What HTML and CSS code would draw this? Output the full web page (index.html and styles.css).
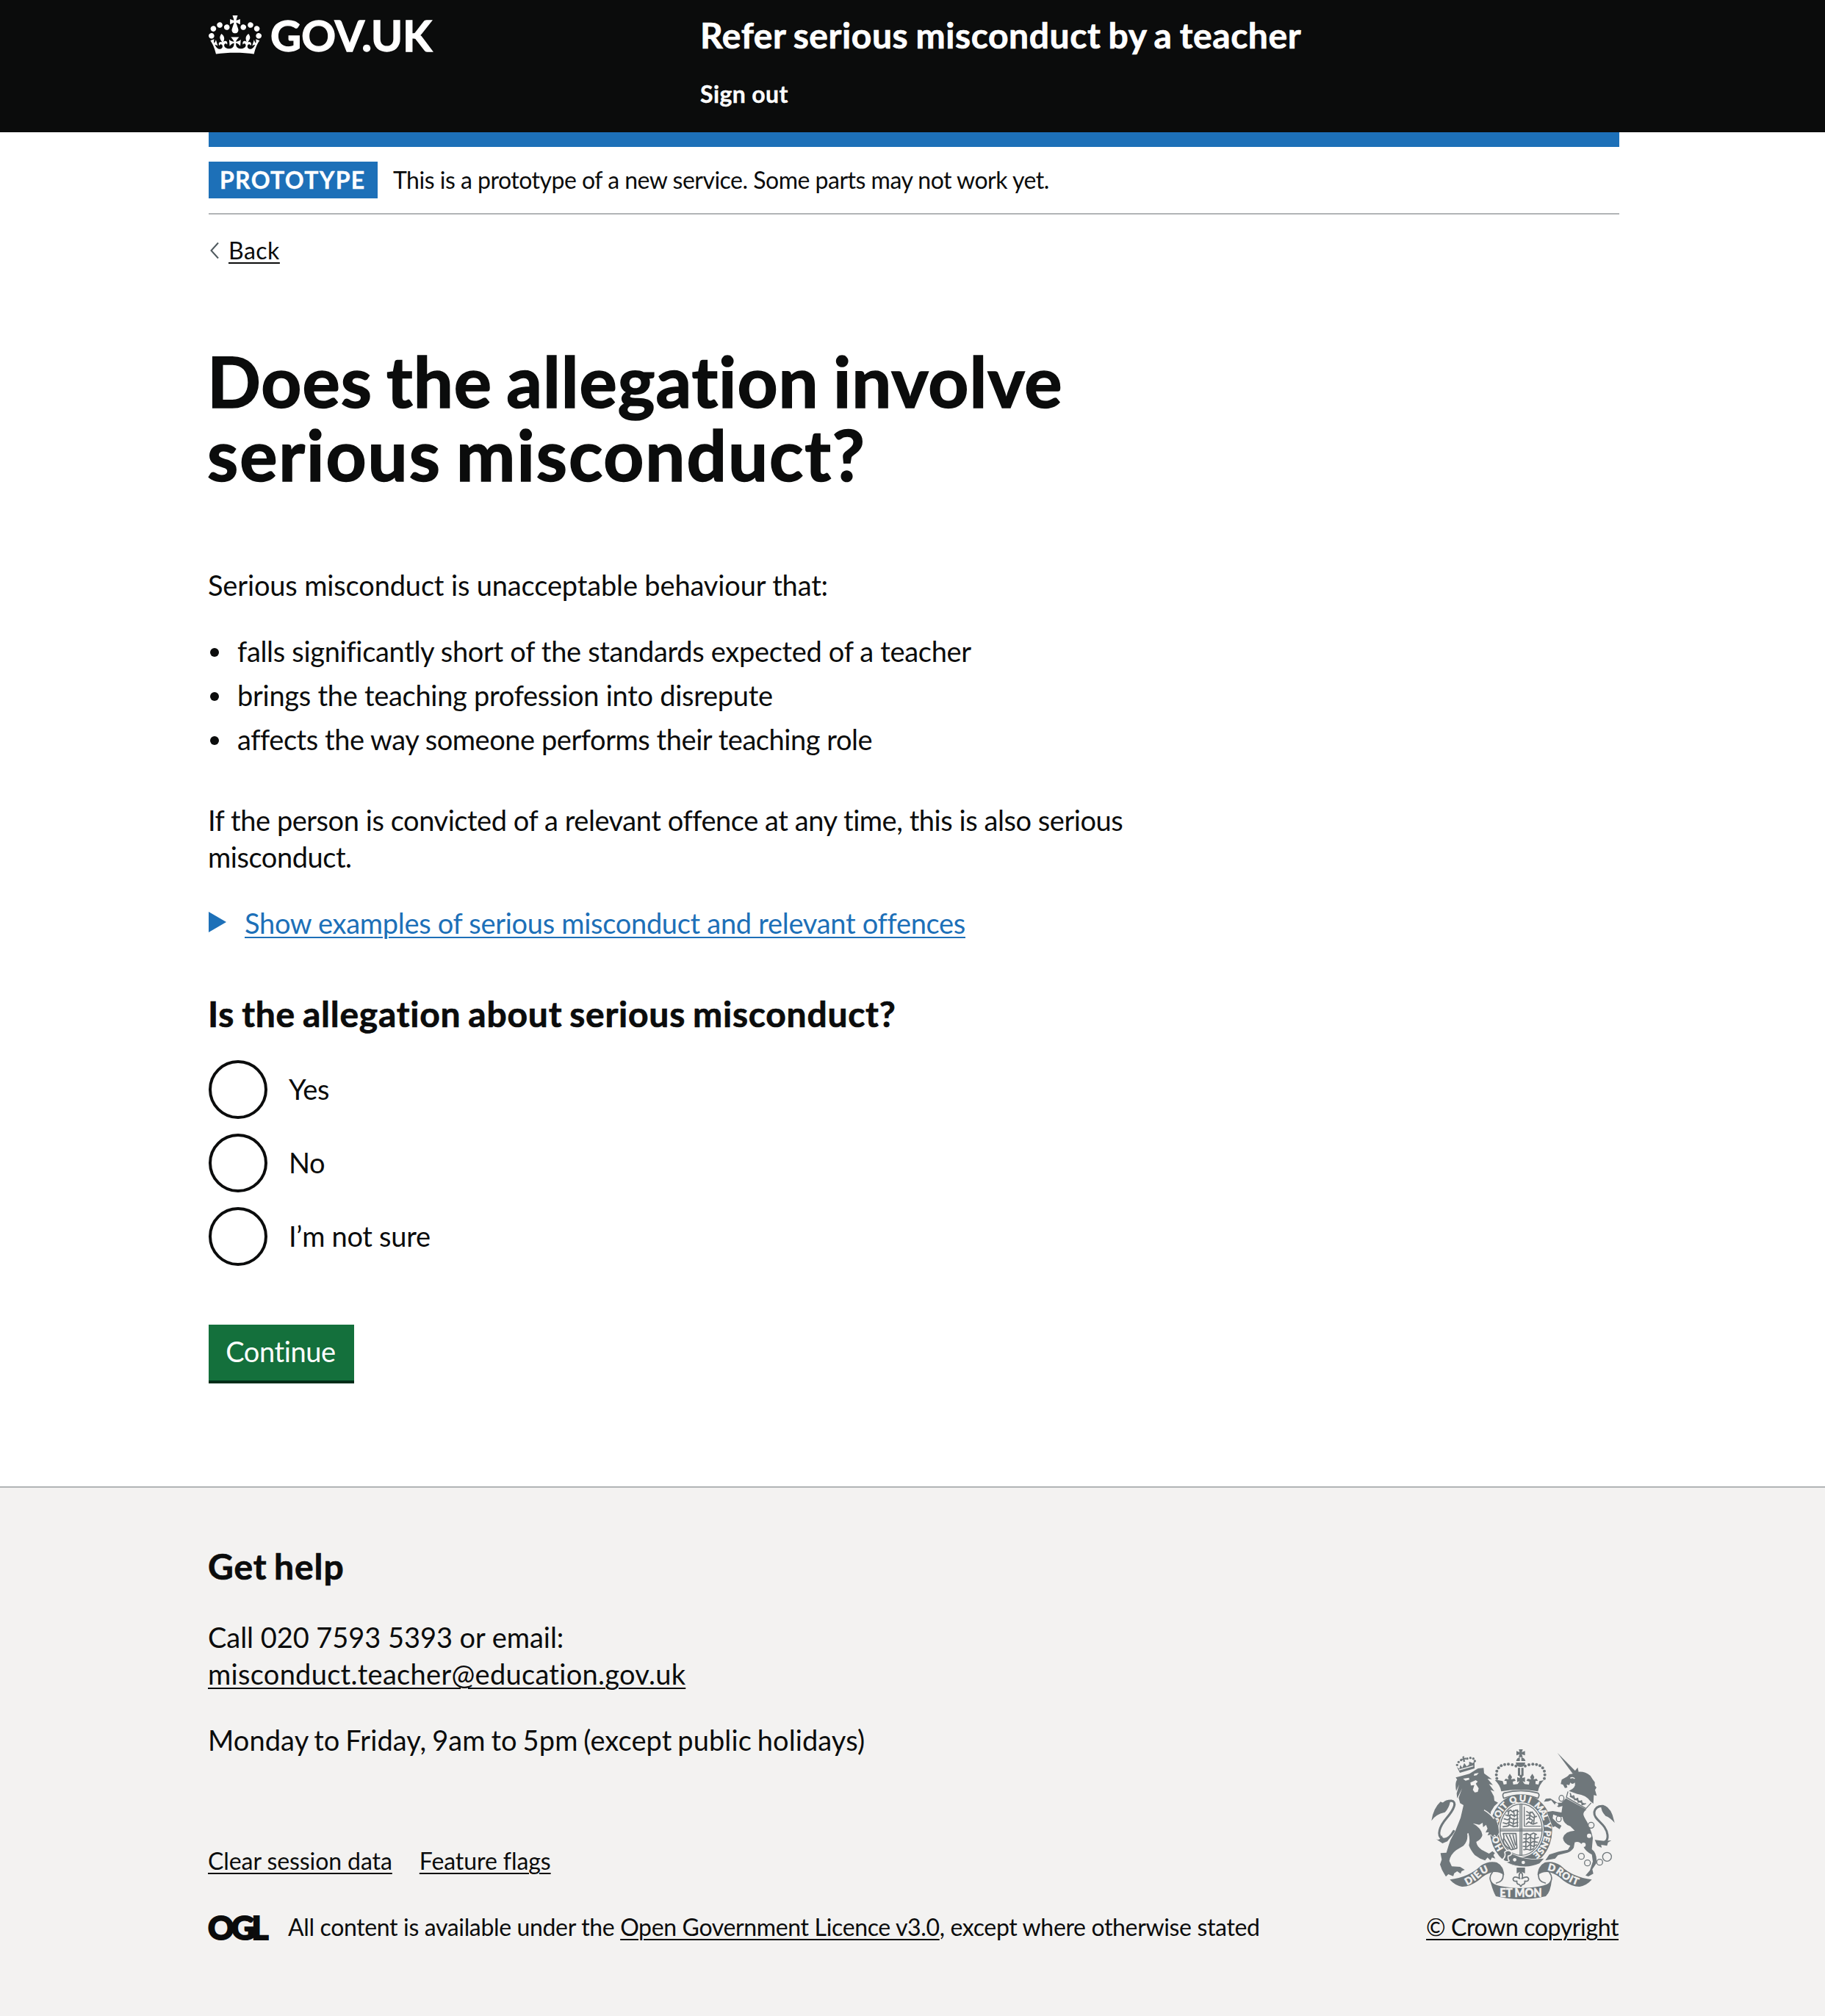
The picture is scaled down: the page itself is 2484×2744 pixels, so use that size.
FILE: index.html
```html
<!DOCTYPE html>
<html lang="en">
<head>
<meta charset="utf-8">
<title>Does the allegation involve serious misconduct?</title>
<link rel="stylesheet" href="styles.css">
</head>
<body>
<header class="header">
  <div class="container header-row">
    <a class="logo" href="#">
      <svg class="crown" viewBox="0 0 132 97" width="72" height="53" aria-hidden="true"><path fill="#fff" d="M25 30.2c3.5 1.5 7.7-.2 9.1-3.7 1.5-3.6-.2-7.8-3.9-9.2-3.6-1.4-7.6.3-9.1 3.9-1.4 3.5.3 7.5 3.9 9zM9 39.5c3.6 1.5 7.8-.2 9.2-3.7 1.5-3.6-.2-7.8-3.9-9.1-3.6-1.5-7.6.2-9.1 3.8-1.4 3.5.3 7.5 3.8 9zM4.4 57.2c3.5 1.5 7.7-.2 9.1-3.8 1.5-3.6-.2-7.7-3.9-9.1-3.5-1.5-7.6.3-9.1 3.8-1.4 3.5.3 7.6 3.9 9.1zm38.3-21.4c3.5 1.5 7.7-.2 9.1-3.8 1.5-3.6-.2-7.7-3.9-9.1-3.6-1.5-7.6.3-9.1 3.8-1.3 3.6.4 7.7 3.9 9.1zm64.4-5.6c-3.6 1.5-7.8-.2-9.1-3.7-1.5-3.6.2-7.8 3.8-9.2 3.6-1.4 7.7.3 9.2 3.9 1.3 3.5-.4 7.5-3.9 9zm15.9 9.3c-3.6 1.5-7.7-.2-9.1-3.7-1.5-3.6.2-7.8 3.7-9.1 3.6-1.5 7.7.2 9.2 3.8 1.5 3.5-.3 7.5-3.8 9zm4.7 17.7c-3.6 1.5-7.8-.2-9.2-3.8-1.5-3.6.2-7.7 3.9-9.1 3.6-1.5 7.7.3 9.2 3.8 1.3 3.5-.4 7.6-3.9 9.1zM89.3 35.8c-3.6 1.5-7.8-.2-9.2-3.8-1.4-3.6.2-7.7 3.9-9.1 3.6-1.5 7.7.3 9.1 3.8 1.4 3.6-.3 7.7-3.8 9.1zM69.7 17.7l8.9 4.7V9.3l-8.9 2.8c-.2-.3-.5-.6-.9-.9L72.4 0H59.6l3.5 11.2c-.3.3-.6.5-.9.9l-8.8-2.8v13.1l8.8-4.7c.3.3.6.7.9.9l-5 15.4v.1c-.2.8-.4 1.6-.4 2.4 0 4.1 3.1 7.5 7 8.1h.2c.3 0 .7.1 1 .1.4 0 .7 0 1-.1h.2c4-.6 7.1-4.1 7.1-8.1 0-.8-.1-1.7-.4-2.4V34l-5.1-15.4c.4-.2.7-.6 1-.9zM66 92.8c16.9 0 32.8 1.1 47.1 3.2 4-16.9 8.9-26.7 14-33.5l-9.6-3.4c1 4.9 1.1 7.2 0 10.2-1.5-1.4-3-4.3-4.2-8.7L108.6 76c2.8-2 5-3.2 7.5-3.3-4.4 9.4-10 11.9-13.6 11.2-4.3-.8-6.3-4.6-5.6-7.9 1-4.7 5.7-5.9 8-.5 4.3-8.7-3-11.4-7.6-8.8 7.1-7.2 7.9-13.5 2.1-21.1-8 6.1-8.1 12.3-4.5 20.8-4.7-5.4-12.1-2.5-9.5 6.2 3.4-5.2 7.9-2 7.2 3.1-.6 4.3-6.4 7.8-13.5 7.2-10.3-.9-10.9-8-11.2-13.8 2.5-.5 7.1 1.8 11 7.3L80.2 60c-4.1 4.4-8 5.3-12.3 5.4 1.4-4.4 8-11.6 8-11.6H55.5s6.4 7.2 7.9 11.6c-4.2-.1-8-1-12.3-5.4l1.4 16.4c3.9-5.5 8.5-7.7 10.9-7.3-.3 5.8-.9 12.8-11.1 13.8-7.2.6-12.9-2.9-13.5-7.2-.7-5 3.8-8.3 7.1-3.1 2.7-8.7-4.6-11.6-9.4-6.2 3.7-8.5 3.6-14.7-4.6-20.8-5.8 7.6-5 13.9 2.2 21.1-4.7-2.6-11.9.1-7.7 8.8 2.3-5.5 7.1-4.2 8.1.5.7 3.3-1.3 7.1-5.7 7.9-3.5.7-9-1.8-13.5-11.2 2.5.1 4.7 1.3 7.5 3.3l-4.7-15.4c-1.2 4.4-2.7 7.2-4.3 8.7-1.1-3-.9-5.3 0-10.2l-9.5 3.4c5 6.9 9.9 16.7 14 33.5 14.8-2.1 30.8-3.2 47.7-3.2z"/></svg>
      <span class="logo-text">GOV.UK</span>
    </a>
    <div class="header-content">
      <a class="service-name" href="#">Refer serious misconduct by a teacher</a>
      <a class="sign-out" href="#">Sign out</a>
    </div>
  </div>
</header>

<div class="container">
  <div class="blue-bar"></div>
  <div class="phase-banner">
    <strong class="tag">PROTOTYPE</strong>
    <span class="phase-text">This is a prototype of a new service. Some parts may not work yet.</span>
  </div>
  <a class="back-link" href="#">
    <svg width="12" height="24" viewBox="0 0 12 24" aria-hidden="true"><path d="M11 1.5 1.5 12 11 22.5" fill="none" stroke="#505a5f" stroke-width="2"/></svg>
    <span class="link small back-text">Back</span>
  </a>

  <main class="main">
    <h1 class="title"><span class="title-line">Does the allegation involve</span> <span class="title-line title-line-wide">serious misconduct?</span></h1>
    <p class="body intro">Serious misconduct is unacceptable behaviour that:</p>
    <ul class="list">
      <li class="list-item falls">falls significantly short of the standards expected of a teacher</li>
      <li class="list-item brings">brings the teaching profession into disrepute</li>
      <li class="list-item affects">affects the way someone performs their teaching role</li>
    </ul>
    <p class="body convicted">If the person is convicted of a relevant offence at any time, this is also serious misconduct.</p>
    <div class="details">
      <span class="arrow"></span>
      <span class="link details-text">Show examples of serious misconduct and relevant offences</span>
    </div>
    <h2 class="heading question">Is the allegation about serious misconduct?</h2>
    <div class="radios">
      <div class="radio"><span class="circle"></span><span class="label">Yes</span></div>
      <div class="radio"><span class="circle"></span><span class="label">No</span></div>
      <div class="radio"><span class="circle"></span><span class="label">I’m not sure</span></div>
    </div>
    <button class="button" type="button">Continue</button>
  </main>
</div>

<footer class="footer">
  <div class="container footer-row">
    <div class="footer-main">
      <h2 class="heading help">Get help</h2>
      <p class="body call">Call 020 7593 5393 or email:<br><a class="link email" href="#">misconduct.teacher@education.gov.uk</a></p>
      <p class="body hours">Monday to Friday, 9am to 5pm (except public holidays)</p>
      <div class="footer-links small"><a class="link" href="#">Clear session data</a><a class="link" href="#">Feature flags</a></div>
      <div class="licence">
        <span class="ogl">OGL</span>
        <span class="small licence-text">All content is available under the <a class="link" href="#">Open Government Licence v3.0</a>, except where otherwise stated</span>
      </div>
    </div>
    <a class="copyright" href="#">
      <svg class="arms" viewBox="144 90 750 612" width="250" height="204" aria-hidden="true">
        <defs>
          <path id="garter" pathLength="668" d="M511 533A96 115 0 0 1 415 418A96 115 0 0 1 511 303A96 115 0 0 1 607 418A96 115 0 0 1 511 533"/>
          <path id="scroll-left" d="M290 645Q327 628 352 602Q368 590 396 586"/>
          <path id="scroll-right" d="M618 584Q646 588 666 604Q703 634 750 647"/>
        </defs>
        <!-- garter and shield -->
        <ellipse class="ink" cx="511" cy="420" rx="127" ry="148"/>
        <path class="line w5 capfill" d="M442 268Q510 250 578 268Q590 274 580 290 510 262 440 290 432 274 442 268z"/>
        <ellipse class="paper" cx="511" cy="418" rx="92" ry="112"/>
        <ellipse class="line w4" cx="511" cy="418" rx="86" ry="105"/>
        <path class="line w4" d="M507 314V522M514 314V522M426 416H597M426 423H597M524 326V404H590"/>
        <path class="line w5" d="M456 344l12-6 8 8 14-8 10 6M448 358l12 4 10-6 12 6 16-6M442 374l14 4 12-8 14 8 16-6M438 390l14 4 12-8 16 8 18-6M438 406l16-2 10-6 16 8 18-4M462 340l-4 18M480 340l4 24M496 338v68M466 362l-6 40M482 372l-4 30"/>
        <path class="line w5" d="M534 344l12 8 10-6 10 14M532 360l14-2 14 10 14-4M534 376l10-6 14 10-6 14M532 396l10-10 18 10 16-6M548 346l-2 30M566 360l-4 34"/>
        <path class="line w5" d="M522 438l14-4 10 6 16-8 12 6M522 454l16 2 10-8 14 8 20-6M520 470l14-4 14 8 14-8 16 4M520 486l16 2 10-8 14 6 14-6M522 500l14-2 12 4 14-6M532 434l-2 64M550 440v58M568 436l-4 54"/>
        <path class="line w5" d="M438 434l52 0 4 60-22 6M438 436q6 10 0 24 0 26 34 40M450 440l28 56M464 440l20 50M478 440l10 40M442 456l24 38"/>
        <path class="ink edge" d="M458 508Q500 536 560 540L604 536 586 556Q546 574 500 566 464 560 446 546z"/>
        <path class="buckle w5" d="M444 510q14-14 28 0 4 12-14 16-2 10 4 20-16 8-26-6 14-12 8-30z"/>
        <circle class="paper" cx="485" cy="541" r="7"/><circle class="paper" cx="520" cy="552" r="7"/>
        <g class="motto" font-size="36">
          <text><textPath href="#garter" startOffset="84" textLength="58">HO</textPath></text>
          <text><textPath href="#garter" startOffset="194" textLength="82">SOIT</textPath></text>
          <text><textPath href="#garter" startOffset="290" textLength="80">QUI</textPath></text>
          <text><textPath href="#garter" startOffset="390" textLength="72">MAL</textPath></text>
          <text><textPath href="#garter" startOffset="474" textLength="20">Y</textPath></text>
          <text><textPath href="#garter" startOffset="504" textLength="112">PENSE</textPath></text>
        </g>
        <!-- lion -->
        <g class="ink">
          <circle cx="250" cy="154" r="5"/><circle cx="256" cy="142" r="5"/><circle cx="266" cy="134" r="5"/><circle cx="291" cy="128" r="5"/><circle cx="304" cy="125" r="5"/><circle cx="316" cy="128" r="5"/><circle cx="322" cy="138" r="5"/>
          <path d="M271 120l8-2-1 8 7-2 2 8-7-1 3 9-8 2-1-9-7 3-1-8 7 0zM249 162l10 8 4-16 8 12 8-20 10 14 10-8 0-12 14 6 8-6 0 28-60 18z"/>
        </g>
        <path class="cut" d="M258 174l58-16"/>
        <path class="ink edge" d="M244 205L262 200 300 190 335 168 358 166 360 188 392 212 374 210 396 236 380 232 402 262 386 256 400 282 402 300 417 308 402 322 388 344 386 358 408 376 418 404 421 430 412 448 402 438 396 448 388 438 374 442 380 428 366 430 374 414 368 398 356 408 354 390 340 398 314 392Q350 412 353 440 350 456 328 468 330 486 350 500L380 516 394 506 404 514 398 522 406 536 392 532 386 544 374 532 364 544 344 536 322 522Q304 500 298 482 304 460 296 432L291 434Q296 462 276 484L246 502Q222 520 218 546L228 568 262 570 281 582 268 588 264 598 250 588 238 596 234 608 214 600 204 610 196 596 188 582 180 560 187 540 182 514 206 512 214 486 222 462 244 420 264 370 276 318 262 310 256 288 270 250 250 290 248 270 258 234 246 260Q240 226 250 214z"/>
        <g class="ink">
          <path d="M207 300Q194 312 182 304 152 332 145 382 160 356 200 347 216 332 222 303zM163 456Q182 466 186 440L194 456 222 450 210 466 190 474z"/>
        </g>
        <path class="line w9" d="M236 424Q214 464 188 455C166 440 178 405 206 372C240 332 250 304 226 300Q204 300 196 310"/>
        <path class="paper" d="M274 210l24-4 2 8-16 4zM320 190l18-4-8 10-12 2zM304 226l22-10 8 6-8 8 12 20-4 14-12 2-8-10 6-20-14 2z"/>
        <path class="cut" d="M360 338Q384 352 400 374"/>
        <!-- crown -->
        <g class="ink">
          <path d="M502 90h16l-4 12 13-5v18l-13-5 4 12h-17l4-12-13 5v-18l13 5zM491 138q2-14 15-15v15zM512 123q14 1 17 15h-17z"/>
          <path d="M489 144h39q-2 18-19 18t-20-18zM498 166h9v32h-9zM512 166h9v32h-9z"/>
          <circle cx="410" cy="194" r="6"/><circle cx="412" cy="179" r="6"/><circle cx="419" cy="166" r="6"/><circle cx="430" cy="157" r="6"/><circle cx="444" cy="152" r="6"/><circle cx="459" cy="151" r="6"/><circle cx="475" cy="153" r="6"/><circle cx="490" cy="158" r="6"/><circle cx="412" cy="209" r="6"/>
          <circle cx="608" cy="194" r="6"/><circle cx="606" cy="179" r="6"/><circle cx="599" cy="166" r="6"/><circle cx="588" cy="157" r="6"/><circle cx="574" cy="152" r="6"/><circle cx="559" cy="151" r="6"/><circle cx="543" cy="153" r="6"/><circle cx="528" cy="158" r="6"/><circle cx="606" cy="209" r="6"/>
          <path d="M418 216l18 4 4 14 12-2 0-12-10-2 6-8 12 3-3-10 8-13 9 13-4 10 14-3 5 8-12 4 2 12 18-2 8-12-10 4v-20l12 4-4-14h16l-4 14 12-4v20l-10-4 8 12 18 2 2-12-12-4 5-8 14 3-4-10 9-13 8 13-3 10 12-3 6 8-10 2 0 12 12 2 4-14 18-4q-20 20-24 46-75-14-150 0-4-26-26-46z"/>
        </g>
        <!-- unicorn -->
        <path class="ink edge" d="M694 290L778 336Q758 350 770 368 796 410 804 452L800 498Q818 512 819 540L818 556 802 580 806 598 786 609 774 605 792 584 804 548 800 520Q772 506 764 484 748 462 730 470L726 492Q716 508 700 512L662 522 650 536 610 544 626 520 664 508 702 500 712 484Q684 474 682 452 690 424 730 422L712 404Q684 396 680 366L668 366 642 356 640 372 660 392 676 402 668 416 650 404 640 408 626 372 616 346 640 342 676 348 680 322 664 326 650 318 634 298 622 302 604 304 612 292 630 290 646 300 658 308 676 308z"/>
        <g class="ink">
          <path d="M659 104L734 180 722 190z"/>
          <path d="M722 190L742 164 746 182Q772 180 794 198L804 214 812 224 812 238 819 246 813 256 820 280 808 277 806 312 794 302Q776 276 740 272L706 260Q736 248 731 226 720 236 712 226L708 236 697 234 700 246 690 248 682 234 673 232 677 214Q704 200 708 192z"/>
          <path d="M838 318Q868 316 884 358L893 390Q874 368 856 362 836 342 838 318zM812 460L822 484 840 492 838 480 862 484 866 470 880 462 850 464z"/>
        </g>
        <path class="line w9" d="M822 470Q868 478 864 440C858 390 806 380 810 346Q816 320 846 322"/>
        <path class="line w4" d="M702 264l-6 22 80 46 20-22"/>
        <path class="line w5" d="M712 270l4 14 10-4 4 16 12-6 2 16 14-6 2 16 14-4M712 282l58 32"/>
        <path class="cut" d="M712 208q10-6 18 2"/>
        <g class="line w4"><ellipse cx="676" cy="290" rx="10" ry="12"/><ellipse cx="665" cy="374" rx="10" ry="12"/><circle class="paper-fill" cx="797" cy="400" r="12"/><circle cx="757" cy="527" r="12"/><circle cx="782" cy="554" r="12"/><circle cx="832" cy="551" r="12"/><circle cx="862" cy="529" r="18"/></g>
        <circle class="paper" cx="656" cy="316" r="7"/><circle class="paper" cx="789" cy="443" r="9"/><circle class="paper" cx="766" cy="480" r="9"/>
        <!-- scroll -->
        <path class="ink edge" d="M220 622Q300 612 348 564 380 544 412 552 440 566 442 604 420 588 394 592 366 598 336 626 300 652 270 651 240 646 220 622z"/>
        <path class="ink edge" d="M800 622Q720 612 672 564 640 544 608 552 580 566 578 604 600 588 626 592 654 598 684 626 720 652 750 651 780 646 800 622z"/>
        <path class="line w5" d="M438 600Q440 630 410 636M394 592Q372 620 400 644M582 600Q580 630 610 636M626 592Q648 620 620 644"/>
        <path class="ink" d="M384 624Q392 652 510 657 628 652 636 624 632 672 612 690 510 714 408 690 396 670 384 624z"/>
        <path class="ink" d="M493 573h34v24l-17-8-17 8z"/>
        <path class="line w5" d="M510 590q12 14 4 28 24-14 28 2-2 12-16 8 2 14-10 14l-6 8-6-8q-12 0-10-14-14 4-16-8 4-16 28-2-8-14 4-28z"/>
        <g class="motto">
          <text font-size="40"><textPath href="#scroll-left" textLength="106">DIEU</textPath></text>
          <text font-size="40"><textPath href="#scroll-right" textLength="138">DROIT</textPath></text>
          <text font-size="48" x="424" y="692" textLength="172" lengthAdjust="spacingAndGlyphs">ET MON</text>
        </g>
      </svg>
      <span class="link small copyright-text">© Crown copyright</span>
    </a>
  </div>
</footer>
</body>
</html>
```
FILE: styles.css
```css
* { box-sizing: border-box; }

body {
  margin: 0;
  background: #fff;
  color: #0b0c0c;
  font-family: Lato, "Liberation Sans", sans-serif;
  font-size: 38px;
  line-height: 50px;
  font-variant-ligatures: none;
}

a { color: inherit; text-decoration: none; }
h1, h2, p, ul { margin: 0; padding: 0; font-weight: 400; }

.container { width: 1920px; margin-left: 284px; }

.link {
  text-decoration: underline;
  text-decoration-thickness: 2px;
  text-underline-offset: 4px;
}

.small { font-size: 32px; line-height: 40px; }

/* Header */
.header { height: 180px; background: #0b0c0c; color: #fff; }
.header-row { display: flex; }
.logo { display: flex; width: 669px; padding-top: 17px; }
.crown { margin-top: 4px; }
.logo-text {
  margin-left: 12px;
  padding-top: 1px;
  font-size: 58px;
  line-height: 60px;
  font-weight: 700;
  letter-spacing: 0.1px;
  -webkit-text-stroke: 1.4px #fff;
}
.header-content { display: flex; flex-direction: column; padding-top: 18px; }
.service-name {
  font-size: 48px;
  line-height: 60px;
  font-weight: 700;
  letter-spacing: 0.57px;
  word-spacing: -2px;
  -webkit-text-stroke: 0.7px #fff;
}
.sign-out {
  margin-top: 30px;
  font-size: 32px;
  line-height: 40px;
  font-weight: 700;
  letter-spacing: 0.4px;
  -webkit-text-stroke: 0.4px #fff;
}

/* Phase banner */
.blue-bar { height: 20px; background: #1d70b8; }
.phase-banner {
  display: flex;
  align-items: center;
  height: 92px;
  border-bottom: 2px solid #b1b4b6;
}
.tag {
  width: 230px;
  height: 50px;
  padding: 5px 0 0 15px;
  margin-right: 21px;
  background: #1d70b8;
  color: #fff;
  font-size: 32px;
  line-height: 40px;
  font-weight: 700;
  letter-spacing: 1.3px;
  -webkit-text-stroke: 0.4px #fff;
}
.phase-text { font-size: 32px; line-height: 40px; letter-spacing: -0.5px; }

.back-link { display: flex; align-items: center; width: 120px; margin: 29px 0 0 2px; }
.back-text { margin-left: 13px; letter-spacing: 0.5px; }

/* Main */
.main { padding-top: 107px; }
.title { margin-left: -2px; font-size: 96px; line-height: 100px; word-spacing: -5px; }
.title-line {
  display: block;
  font-weight: 700;
  letter-spacing: 0.95px;
  -webkit-text-stroke: 1.6px #0b0c0c;
}
.title-line-wide { letter-spacing: 1.95px; }
.body { width: 1270px; margin-left: -1px; }
.intro { margin-top: 103px; letter-spacing: -0.15px; }
.list { list-style: none; margin-top: 40px; }
.list-item { display: flex; align-items: center; height: 50px; margin-bottom: 10px; }
.list-item::before {
  content: "";
  width: 12px;
  height: 12px;
  margin: 4px 25px 0 2px;
  border-radius: 50%;
  background: #0b0c0c;
}
.falls { letter-spacing: -0.32px; }
.brings { letter-spacing: -0.28px; }
.affects { letter-spacing: -0.45px; }
.convicted { margin-top: 60px; letter-spacing: -0.45px; }
.details { display: flex; align-items: center; margin-top: 40px; color: #1d70b8; }
.arrow {
  margin: 0 25px 2px 0;
  border-style: solid;
  border-width: 14px 0 14px 24px;
  border-color: transparent transparent transparent #1d70b8;
}
.details-text { letter-spacing: -0.3px; }
.heading {
  margin-left: -1px;
  font-size: 48px;
  line-height: 60px;
  font-weight: 700;
  -webkit-text-stroke: 0.7px #0b0c0c;
}
.question { margin-top: 69px; letter-spacing: 0.76px; word-spacing: -2.5px; }
.radios { display: flex; flex-direction: column; gap: 20px; margin-top: 33px; }
.radio { display: flex; height: 80px; }
.circle { width: 80px; height: 80px; border: 4px solid #0b0c0c; border-radius: 50%; }
.label { margin: 14px 0 0 29px; letter-spacing: -0.3px; }
.button {
  display: block;
  width: 198px;
  height: 80px;
  margin-top: 80px;
  padding: 0 2px 4px 0;
  border: 0;
  border-bottom: 4px solid #002d18;
  background: #14703c;
  color: #fff;
  font: 400 38px/50px Lato, "Liberation Sans", sans-serif;
  letter-spacing: -0.4px;
}

/* Footer */
.footer {
  height: 722px;
  margin-top: 140px;
  border-top: 2px solid #b1b4b6;
  background: #f3f2f1;
}
.footer-row { display: flex; justify-content: space-between; }
.footer-main { margin-left: -1px; padding-top: 77px; }
.footer-main .body, .footer-main .heading { margin-left: 0; }
.help { letter-spacing: 0.9px; word-spacing: -3px; }
.call { margin-top: 41px; letter-spacing: -0.05px; }
.email { letter-spacing: 0.29px; }
.hours { margin-top: 40px; letter-spacing: 0.1px; word-spacing: -2px; }
.footer-links { display: flex; gap: 37px; margin-top: 120px; letter-spacing: -0.08px; }
.licence { display: flex; align-items: flex-start; height: 40px; margin-top: 50px; }
.ogl {
  width: 109px;
  font-size: 44px;
  line-height: 40px;
  font-weight: 900;
  letter-spacing: -4px;
  -webkit-text-stroke: 2px #0b0c0c;
}
.licence-text { letter-spacing: -0.35px; }
.copyright {
  display: flex;
  flex-direction: column;
  align-items: flex-end;
  margin-right: 1px;
  padding-top: 356px;
}
.arms { margin-right: 5px; }
.copyright-text { margin-top: 18px; letter-spacing: -0.38px; }

.ink { fill: #6f777b; }
.paper { fill: #f3f2f1; }
.edge { stroke: #f3f2f1; stroke-width: 4; paint-order: stroke; }
.line { fill: none; stroke: #6f777b; stroke-linecap: round; stroke-linejoin: round; }
.line.capfill, .line .paper-fill { fill: #f3f2f1; }
.buckle { fill: #6f777b; stroke: #f3f2f1; }
.cut { fill: none; stroke: #f3f2f1; stroke-width: 4; }
.w4 { stroke-width: 4; }
.w5 { stroke-width: 5; }
.w9 { stroke-width: 9; }
.motto {
  fill: #f3f2f1;
  stroke: #f3f2f1;
  stroke-width: 1.5;
  font-family: Lato, sans-serif;
  font-weight: 900;
}
```
